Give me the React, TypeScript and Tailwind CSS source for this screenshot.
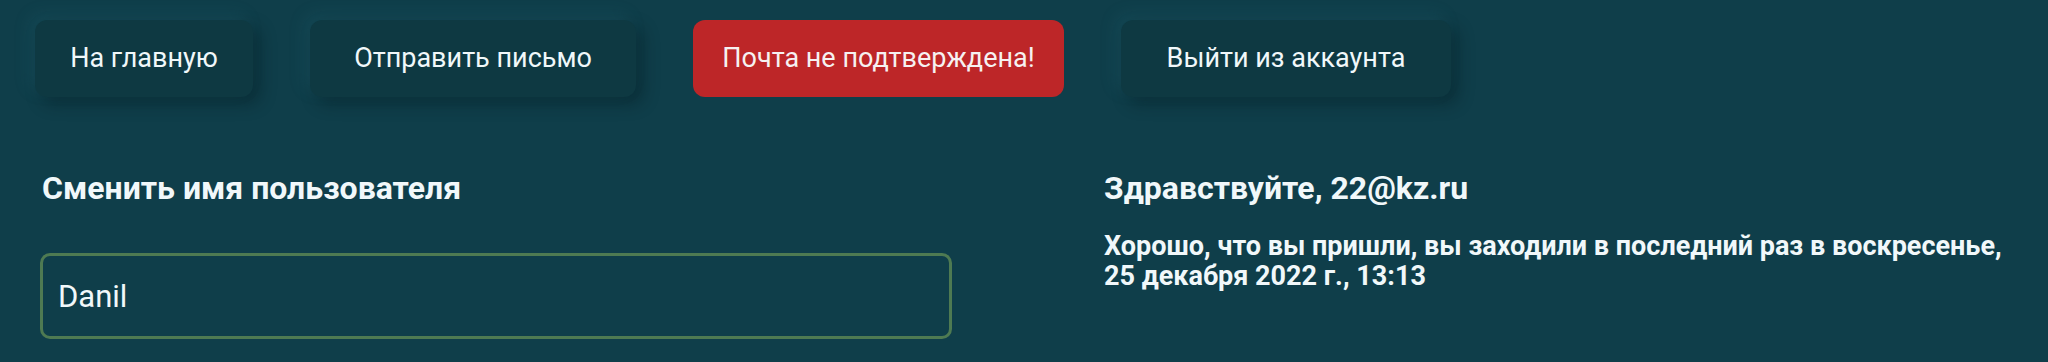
const darkBtn =
  'flex h-[77px] items-center justify-center rounded-[12px] bg-[#0e3942] text-[27px] text-[#f1f8fa] shadow-[-6px_-6px_16px_rgba(40,110,125,0.2),7px_7px_16px_rgba(4,25,30,0.4)]'

const App = () => (
  <div className="min-h-[362px] w-full bg-[#0f3e4a] font-['Roboto','Liberation_Sans',sans-serif] text-[#f1f8fa]">
    <nav className="flex gap-[57px] pl-[35px] pt-[20px]">
      <button className={`${darkBtn} w-[218px]`}>На главную</button>
      <button className={`${darkBtn} w-[326px]`}>Отправить письмо</button>
      <button className="flex h-[77px] w-[371px] items-center justify-center rounded-[12px] bg-[#bd2628] text-[27px] text-[#f6f1f1]">
        Почта не подтверждена!
      </button>
      <button className={`${darkBtn} w-[330px]`}>Выйти из аккаунта</button>
    </nav>

    <main className="flex justify-between pl-[40px] pr-[26px] pt-[73px]">
      <section className="w-[912px]">
        <h2 className="pl-[2px] text-[32px] font-bold leading-[36px]">Сменить имя пользователя</h2>
        <input
          defaultValue="Danil"
          className="mt-[47px] h-[86px] w-full rounded-[10px] border-[3px] border-[#4e7a52] bg-transparent px-[15px] text-[31px] text-[#f1f8fa] outline-none"
        />
      </section>

      <section className="w-[918px]">
        <h2 className="text-[32px] font-bold leading-[36px]">Здравствуйте, 22@kz.ru</h2>
        <p className="mt-[25px] text-[27px] font-bold leading-[30px]">
          Хорошо, что вы пришли, вы заходили в последний раз в воскресенье, 25 декабря 2022 г., 13:13
        </p>
      </section>
    </main>
  </div>
)

export default App
